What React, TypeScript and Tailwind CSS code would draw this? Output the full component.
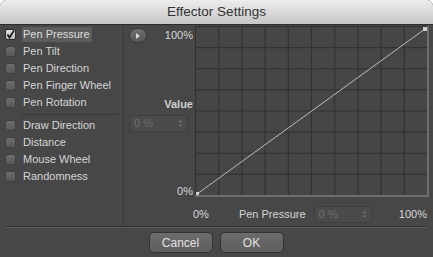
import React from 'react';

const firstGroup = ['Pen Pressure', 'Pen Tilt', 'Pen Direction', 'Pen Finger Wheel', 'Pen Rotation'];
const secondGroup = ['Draw Direction', 'Distance', 'Mouse Wheel', 'Randomness'];

function CheckRow({ label, checked = false }: { label: string; checked?: boolean }) {
  return (
    <div className="h-[17px] flex items-center">
      <div
        className={
          checked
            ? 'ml-[5px] w-[11px] h-[11px] rounded-[2px] bg-gradient-to-b from-[#e4e4e4] to-[#b4b4b4] border border-[#2c2c2c] flex items-center justify-center'
            : 'ml-[5px] w-[11px] h-[11px] rounded-[3px] bg-gradient-to-b from-[#6e6e6e] to-[#585858] border border-[#404040]'
        }
      >
        {checked && (
          <svg width="9" height="9" viewBox="0 0 9 9">
            <path d="M1.5 4.5 L3.5 7.5 L8 0.5" stroke="#111" strokeWidth="1.6" fill="none" />
          </svg>
        )}
      </div>
      <div
        className={
          checked
            ? 'ml-[6px] h-[15px] w-[70px] pl-[1px] flex items-center bg-[#5c5c5c] text-[#dedede]'
            : 'ml-[6px] pl-[1px] text-[#d6d6d6]'
        }
      >
        {label}
      </div>
    </div>
  );
}

function NumberField({ width }: { width: string }) {
  return (
    <div className={`${width} h-[17px] flex items-center justify-between rounded-[2px] bg-[#4b4b4b] border border-[#3e3e3e] px-[4px] text-[#6f6f6f] text-[11px]`}>
      <span>0 %</span>
      <svg width="5" height="9" viewBox="0 0 5 9">
        <path d="M0.5 3.5 L2.5 1 L4.5 3.5 Z M0.5 5.5 L2.5 8 L4.5 5.5 Z" fill="#6f6f6f" />
      </svg>
    </div>
  );
}

function Graph() {
  const w = 234;
  const h = 171;
  const cols = 10;
  const rows = 8;
  return (
    <svg width={w} height={h} viewBox={`0 0 ${w} ${h}`} className="block">
      <rect x="0" y="0" width={w} height={h} fill="#464646" />
      {Array.from({ length: cols - 1 }, (_, i) => (
        <line key={'v' + i} x1={((i + 1) * (w - 2)) / cols + 0.5} y1="0" x2={((i + 1) * (w - 2)) / cols + 0.5} y2={h} stroke="#323232" strokeWidth="1.2" />
      ))}
      {Array.from({ length: rows - 1 }, (_, i) => (
        <line key={'h' + i} x1="0" y1={((i + 1) * (h - 2)) / rows + 0.5} x2={w} y2={((i + 1) * (h - 2)) / rows + 0.5} stroke="#323232" strokeWidth="1.2" />
      ))}
      <line x1="0.5" y1="0" x2="0.5" y2={h} stroke="#303030" />
      <line x1="0" y1="0.5" x2={w} y2="0.5" stroke="#303030" />
      <rect x={w - 2} y="0" width="2" height={h} fill="#6e6e6e" />
      <rect x="0" y={h - 2} width={w} height="2" fill="#6e6e6e" />
      <line x1="2" y1={h - 3} x2={w - 4} y2="3" stroke="#bdbdbd" strokeWidth="1" />
      <rect x="1" y={h - 5} width="3" height="3" fill="#d0d0d0" />
      <rect x={w - 6} y="1" width="4" height="4" fill="#d0d0d0" />
    </svg>
  );
}

export default function App() {
  return (
    <div className="w-[433px] h-[257px] bg-[#474747] rounded-t-[6px] overflow-hidden flex flex-col font-['Liberation_Sans',sans-serif] text-[11px]">
      {/* title bar */}
      <div className="h-[25px] shrink-0 flex items-center justify-center bg-gradient-to-b from-[#ededed] to-[#c6c6c6] border-b border-[#2c2c2c] text-[#333] text-[13.5px]">
        Effector Settings
      </div>

      <div className="flex h-[201px]">
        {/* sidebar */}
        <div className="w-[124px] shrink-0 border-r border-[#3a3a3a] pt-[1px]">
          {firstGroup.map((l, i) => (
            <CheckRow key={l} label={l} checked={i === 0} />
          ))}
          <div className="h-[6px] flex items-center">
            <div className="ml-[22px] w-[96px] h-px bg-[#363636]" />
          </div>
          {secondGroup.map((l) => (
            <CheckRow key={l} label={l} />
          ))}
        </div>

        {/* value column + graph */}
        <div className="flex-1 flex flex-col">
          <div className="flex h-[172px] mt-[1px]">
            <div className="w-[64px] ml-[5px] flex flex-col items-end">
              <div className="w-full h-[17px] mt-[1px] flex items-center justify-between">
                <div className="w-[18px] h-[15px] rounded-full bg-gradient-to-b from-[#6e6e6e] to-[#575757] border border-[#353535] flex items-center justify-center">
                  <svg width="4" height="6" viewBox="0 0 4 6">
                    <path d="M0 0 L4 3 L0 6 Z" fill="#d8d8d8" />
                  </svg>
                </div>
                <span className="text-[#d6d6d6]">100%</span>
              </div>
              <div className="mt-[53px] h-[14px] flex items-center font-bold text-[#cfcfcf]">Value</div>
              <div className="mt-[4px] self-start">
                <NumberField width="w-[59px]" />
              </div>
              <div className="mt-auto mb-[-1px] text-[#d6d6d6]">0%</div>
            </div>
            <div className="ml-[2px]">
              <Graph />
            </div>
          </div>
          <div className="h-[18px] mt-[7px] flex items-center text-[#d6d6d6]">
            <span className="ml-[69px]">0%</span>
            <span className="ml-[30px]">Pen Pressure</span>
            <div className="ml-[8px]">
              <NumberField width="w-[58px]" />
            </div>
            <span className="ml-auto mr-[6px]">100%</span>
          </div>
        </div>
      </div>

      {/* divider */}
      <div className="mx-[5px] h-px bg-[#2e2e2e]" />
      <div className="mx-[5px] h-px bg-[#5e5e5e]" />

      {/* buttons */}
      <div className="flex justify-center gap-[7px] pt-[4px] pr-[1px]">
        <button className="w-[64px] h-[21px] rounded-[5px] bg-gradient-to-b from-[#6c6c6c] to-[#5d5d5d] border border-[#333] text-[#e2e2e2] text-[12px]">
          Cancel
        </button>
        <button className="w-[64px] h-[21px] rounded-[5px] bg-gradient-to-b from-[#6c6c6c] to-[#5d5d5d] border border-[#333] text-[#e2e2e2] text-[12px]">
          OK
        </button>
      </div>
    </div>
  );
}
